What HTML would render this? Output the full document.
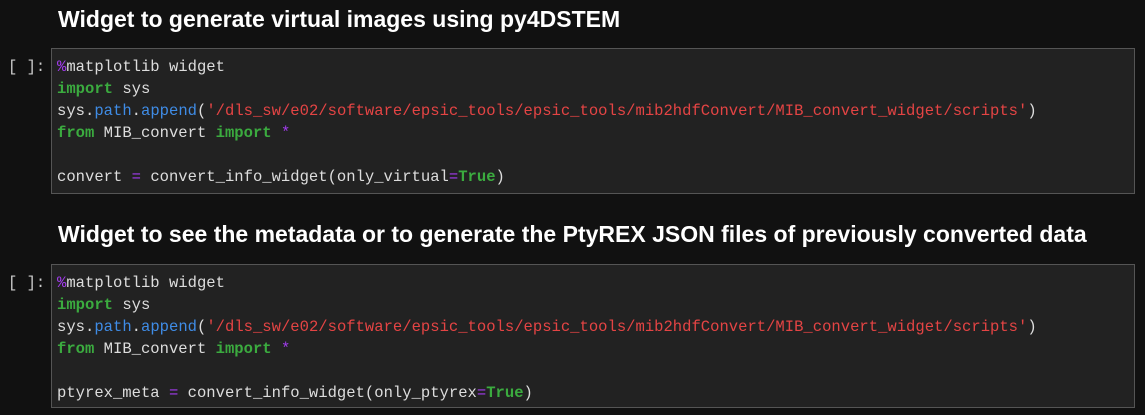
<!DOCTYPE html>
<html><head><style>
body{margin:0;background:#111111;width:1145px;height:415px;overflow:hidden;position:relative;font-family:"Liberation Sans",sans-serif}
h2{position:absolute;left:58px;margin:0;color:#fff;font-size:23px;font-weight:bold;white-space:nowrap}
.p{position:absolute;left:8px;color:#ccc;font:15.5px "Liberation Mono",monospace}
.c{position:absolute;left:51px;width:1084px;background:#222;border:1px solid #555;box-sizing:border-box}
pre{margin:0;padding:7px 0 0 5px;font:500 15.55px/22px "Liberation Mono",monospace;color:#ddd}
.k{color:#3bab3f;font-weight:bold}.m{color:#a33cf0}.s{color:#e44444}.f{color:#3f8ce6}
</style></head><body>
<h2 style="top:6px">Widget to generate virtual images using py4DSTEM</h2>
<div class="p" style="top:58px">[ ]:</div>
<div class="c" style="top:48px;height:146px"><pre><span class="m">%</span>matplotlib widget
<span class="k">import</span> sys
sys.<span class="f">path</span>.<span class="f">append</span>(<span class="s">'/dls_sw/e02/software/epsic_tools/epsic_tools/mib2hdfConvert/MIB_convert_widget/scripts'</span>)
<span class="k">from</span> MIB_convert <span class="k">import</span> <span class="m">*</span>

convert <span class="m">=</span> convert_info_widget(only_virtual<span class="m">=</span><span class="k">True</span>)</pre></div>
<h2 style="top:221px">Widget to see the metadata or to generate the PtyREX JSON files of previously converted data</h2>
<div class="p" style="top:274px">[ ]:</div>
<div class="c" style="top:264px;height:144px"><pre><span class="m">%</span>matplotlib widget
<span class="k">import</span> sys
sys.<span class="f">path</span>.<span class="f">append</span>(<span class="s">'/dls_sw/e02/software/epsic_tools/epsic_tools/mib2hdfConvert/MIB_convert_widget/scripts'</span>)
<span class="k">from</span> MIB_convert <span class="k">import</span> <span class="m">*</span>

ptyrex_meta <span class="m">=</span> convert_info_widget(only_ptyrex<span class="m">=</span><span class="k">True</span>)</pre></div>
</body></html>
